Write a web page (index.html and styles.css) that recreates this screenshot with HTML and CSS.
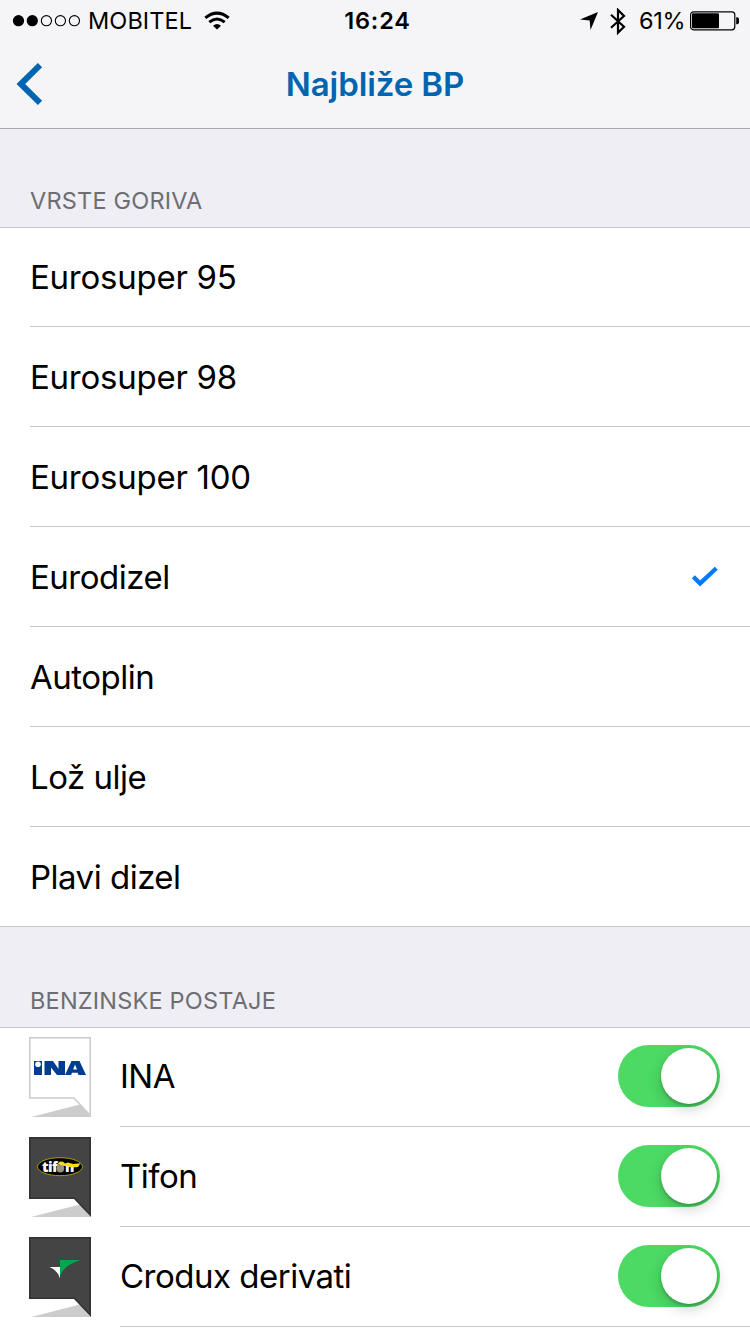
FILE: index.html
```html
<!DOCTYPE html>
<html lang="hr">
<head>
<meta charset="utf-8">
<title>Najbliže BP</title>
<link rel="stylesheet" href="styles.css">
</head>
<body>
<div class="screen">
  <header class="top">
    <div class="status">
      <div class="status-left">
        <svg class="signal" width="70" height="14" viewBox="0 0 70 14"><circle cx="6.5" cy="6.7" r="5.6"/><circle cx="20.3" cy="6.7" r="5.6"/><g fill="none" stroke="#000" stroke-width="1.1"><circle cx="34.4" cy="6.7" r="5.1"/><circle cx="48.4" cy="6.7" r="5.1"/><circle cx="62.4" cy="6.7" r="5.1"/></g></svg>
        <span class="carrier">MOBITEL</span>
        <svg class="wifi" width="26" height="20" viewBox="0 0 26 20"><path d="M13 18.5L9 14.7Q13 11.5 17 14.7Z"/><g fill="none" stroke="#000" stroke-width="3"><path d="M5.3 11.1Q13 4.8 20.7 11.1"/><path d="M1.3 6.9Q13 -2.7 24.7 6.9"/></g></svg>
      </div>
      <div class="clock">16:24</div>
      <div class="status-right">
        <svg class="location" width="18" height="18" viewBox="0 0 18 18"><path d="M18 0L10.5 18L9.7 8.5L0 7.5Z"/></svg>
        <svg class="bluetooth" width="16" height="27" viewBox="0 0 16 27"><path d="M1 6.7L14 18.8L8 24.7V2L14 8L1 19.8" fill="none" stroke="#000" stroke-width="2.2"/></svg>
        <span class="percent">61%</span>
        <svg class="battery" width="50" height="20" viewBox="0 0 50 20"><rect x=".6" y=".8" width="44.2" height="18" rx="3" fill="none" stroke="#000" stroke-width="1.2"/><rect x="2" y="2.3" width="27" height="15" rx="1"/><path d="M46.2 6.3H47.5Q49 6.8 49 8V11.6Q49 12.8 47.5 13.3H46.2Z"/></svg>
      </div>
    </div>
    <div class="nav">
      <svg class="back" width="27" height="42" viewBox="0 0 27 42"><path d="M24 2.2L4.8 21L24 39.8" fill="none" stroke="#0065b1" stroke-width="6"/></svg>
      <h1 class="title">Najbliže BP</h1>
    </div>
  </header>

  <h2 class="section first">VRSTE GORIVA</h2>
  <ul class="list fuels">
    <li class="row super">Eurosuper 95</li>
    <li class="row super">Eurosuper 98</li>
    <li class="row super">Eurosuper 100</li>
    <li class="row">Eurodizel<svg class="check" width="28" height="22" viewBox="0 0 28 22"><path d="M2.4 10.7L9.1 17.4L25.3 2.2" fill="none" stroke="#007aff" stroke-width="4.3"/></svg></li>
    <li class="row">Autoplin</li>
    <li class="row">Lož ulje</li>
    <li class="row">Plavi dizel</li>
  </ul>

  <h2 class="section second">BENZINSKE POSTAJE</h2>
  <ul class="list stations">
    <li class="station">
      <svg class="logo" width="62" height="80" viewBox="0 0 62 80"><path d="M2 80L51 67.5L62 80Z" fill="#ccc"/><path d="M.8 .8H61.2V78.5L45 61H.8Z" fill="#fff" stroke="#ccc" stroke-width="1.6"/><path d="M5 24H13V38H5ZM15.5 24H24L29.5 32V24H36V38H28L22 30.5V38H15.5ZM42.5 24H50.5L57 38H49.5L48.7 35.8H43L42 38H36ZM46 27.5L44.2 32.5H48Z" fill="#003d91" fill-rule="evenodd"/><circle cx="9" cy="27.2" r="2.8" fill="#fff"/></svg>
      <div class="station-body"><span>INA</span><span class="switch"><i class="knob"></i></span></div>
    </li>
    <li class="station">
      <svg class="logo" width="62" height="80" viewBox="0 0 62 80"><path d="M2 80L51 67.5L62 80Z" fill="#ccc"/><path d="M0 0H62V80L45 62H0Z" fill="#333"/><path d="M1.8 1.8H60.2V76L46 60.5H1.8Z" fill="#444"/><ellipse cx="31" cy="29.7" rx="22.5" ry="9" fill="#000" stroke="#a99b16" stroke-width="1"/><text x="13" y="35" class="tifon">tif</text><text x="36" y="35" class="tifon">n</text><ellipse cx="31.3" cy="31.2" rx="3.8" ry="4.3" fill="#92948c"/><path d="M28.5 27L31 24.5L34 24.8L36 26.5L39 25.5L44 27L51.5 26.3L49 30L43 30.5L38 29.3L34 28.7L31 27.5Z" fill="#f7dd19"/></svg>
      <div class="station-body"><span>Tifon</span><span class="switch"><i class="knob"></i></span></div>
    </li>
    <li class="station">
      <svg class="logo" width="62" height="80" viewBox="0 0 62 80"><path d="M2 80L51 67.5L62 80Z" fill="#ccc"/><path d="M0 0H62V80L45 62H0Z" fill="#333"/><path d="M1.8 1.8H60.2V76L46 60.5H1.8Z" fill="#444"/><path d="M31 23H51.5Q35 28 31 39Z" fill="#00a650"/><path d="M20.5 30H31V41.5Q28.5 33 20.5 30Z" fill="#fff"/></svg>
      <div class="station-body"><span>Crodux derivati</span><span class="switch"><i class="knob"></i></span></div>
    </li>
  </ul>
</div>
</body>
</html>
```
FILE: styles.css
```css
* { box-sizing: border-box; }
body { margin: 0; font-family: Inter, "Liberation Sans", sans-serif; color: #000; }
svg { display: block; flex: none; }
h1, h2, ul { margin: 0; padding: 0; font-weight: 400; list-style: none; }

.screen { width: 750px; height: 1334px; overflow: hidden; background: #fff; }

.top { height: 129px; background: #f5f5f7; border-bottom: 1px solid #a7a7ac; }
.status { display: grid; grid-template-columns: 1fr auto 1fr; height: 40px; align-items: center; padding: 1px 10px 0 12px; font-size: 23.5px; line-height: 40px; }
.status-left, .status-right { display: flex; align-items: center; }
.status-right { justify-content: flex-end; }
.carrier { margin-left: 6px; width: 105px; letter-spacing: 0.1px; white-space: nowrap; }
.wifi { margin-left: 11px; }
.clock { padding-left: 3px; font-weight: 600; letter-spacing: 0.8px; }
.bluetooth { margin-left: 12px; }
.percent { margin-left: 13px; width: 46px; letter-spacing: -0.3px; white-space: nowrap; }
.battery { margin-left: 5px; }

.nav { display: grid; grid-template-columns: 1fr auto 1fr; align-items: center; height: 88px; padding: 0 16px; }
.title { font-size: 33px; font-weight: 600; line-height: 40px; letter-spacing: -0.1px; color: #0065b1; }

.section { display: flex; align-items: flex-end; padding: 0 30px 11px; font-size: 23.5px; line-height: 30px; letter-spacing: 0.2px; color: #6d6d72; background: #efeef4; border-bottom: 1px solid #c8c7cc; }
.first { height: 99px; }
.second { height: 101px; }

.list { font-size: 33px; line-height: 40px; letter-spacing: -0.5px; }
.row { display: flex; align-items: center; justify-content: space-between; height: 100px; margin-left: 30px; padding-right: 31px; border-bottom: 1px solid #c8c7cc; }
.super { letter-spacing: -0.25px; }
.fuels { border-bottom: 1px solid #c8c7cc; }
.fuels .row:first-child { height: 99px; }
.fuels .row:last-child { height: 99px; border-bottom: 0; }

.station { display: flex; height: 100px; padding-left: 29px; }
.station:first-child { height: 99px; }
.logo { margin: 10px 29px 0 0; }
.station:first-child .logo { margin-top: 9px; }
.station-body { display: flex; flex: 1; align-items: center; justify-content: space-between; padding: 0 30px 2px 0; border-bottom: 1px solid #c8c7cc; }
.station:first-child .station-body { padding-bottom: 3px; }
.switch { display: flex; align-items: center; justify-content: flex-end; width: 102px; height: 62px; padding-right: 3px; border-radius: 31px; background: #4cd964; }
.knob { width: 56px; height: 56px; border-radius: 50%; background: #fff; box-shadow: 0 5px 14px rgba(0,0,0,.18), 0 2px 3px rgba(0,0,0,.2); }
.tifon { font: 800 14px "Open Sans", sans-serif; fill: #fff; letter-spacing: -0.5px; }
```
